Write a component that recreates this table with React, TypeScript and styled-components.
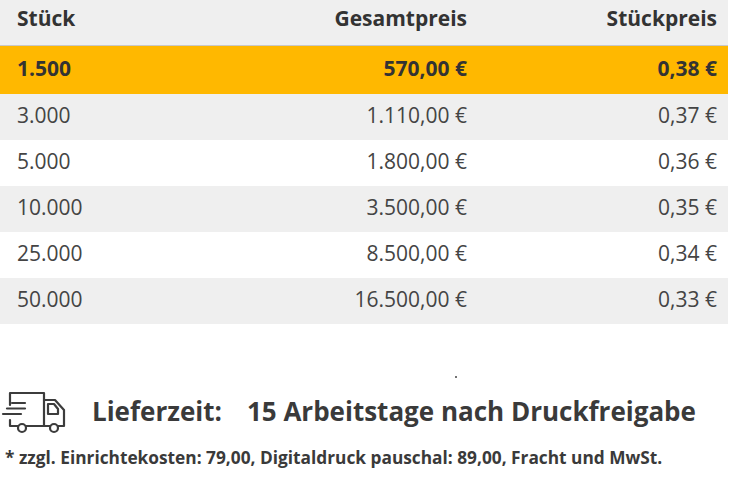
import React from "react";
import styled, { createGlobalStyle } from "styled-components";

const GlobalStyles = createGlobalStyle`
  html, body {
    margin: 0;
    padding: 0;
    background: #ffffff;
  }
  body {
    font-family: "Open Sans", "Noto Sans", sans-serif;
    color: #3a3a3a;
  }
`;

const Page = styled.main`
  width: 730px;
  display: flex;
  flex-direction: column;
`;

const Table = styled.div`
  width: 728px;
  display: flex;
  flex-direction: column;
`;

const Row = styled.div<{ $variant: "head" | "active" | "grey" | "white" }>`
  display: grid;
  grid-template-columns: 200px 250px 250px;
  align-items: center;
  padding: 0 11px 0 17px;
  box-sizing: border-box;
  height: ${(p) => (p.$variant === "active" ? "48px" : "46px")};
  padding-bottom: ${(p) => (p.$variant === "head" ? "9px" : "4px")};
  font-size: 21px;
  font-weight: ${(p) => (p.$variant === "head" || p.$variant === "active" ? 700 : 400)};
  color: ${(p) => (p.$variant === "head" || p.$variant === "active" ? "#333333" : "#444444")};
  background: ${(p) =>
    p.$variant === "active" ? "#ffb800" : p.$variant === "white" ? "#ffffff" : "#efefef"};
  border-bottom: ${(p) => (p.$variant === "head" ? "1px solid #c8c8c8" : "none")};
`;

const Cell = styled.span<{ $right?: boolean }>`
  text-align: ${(p) => (p.$right ? "right" : "left")};
  white-space: nowrap;
`;

const Spacer = styled.div`
  height: 64px;
  position: relative;
`;

const Dot = styled.span`
  position: absolute;
  left: 455px;
  top: 52px;
  width: 2px;
  height: 2px;
  border-radius: 1px;
  background: #444;
`;

const Delivery = styled.div`
  display: flex;
  align-items: center;
  height: 48px;
`;

const TruckIcon = styled.svg`
  width: 72px;
  height: 48px;
  flex: none;
`;

const DeliveryLabel = styled.span`
  margin-left: 20px;
  font-size: 26px;
  font-weight: 700;
  color: #3a3a3a;
  padding-bottom: 2px;
`;

const DeliveryValue = styled.span`
  margin-left: 25px;
  font-size: 26px;
  font-weight: 700;
  color: #3a3a3a;
  padding-bottom: 2px;
  white-space: nowrap;
`;

const Note = styled.p`
  margin: 10px 0 0 5px;
  font-size: 17.3px;
  font-weight: 700;
  color: #3a3a3a;
  white-space: nowrap;
`;

const prices = [
  { qty: "1.500", total: "570,00 €", unit: "0,38 €" },
  { qty: "3.000", total: "1.110,00 €", unit: "0,37 €" },
  { qty: "5.000", total: "1.800,00 €", unit: "0,36 €" },
  { qty: "10.000", total: "3.500,00 €", unit: "0,35 €" },
  { qty: "25.000", total: "8.500,00 €", unit: "0,34 €" },
  { qty: "50.000", total: "16.500,00 €", unit: "0,33 €" },
];

function Truck() {
  return (
    <TruckIcon viewBox="0 0 72 48" fill="none" stroke="#3c3c3c" strokeWidth="2.2" strokeLinecap="round" strokeLinejoin="round">
      <path d="M10 17V5H44V38" />
      <path d="M44 12H55L64 22V38H58" />
      <path d="M48 16H54L58 21V26H48Z" />
      <path d="M12 15H25" />
      <path d="M7 20.5H25" />
      <path d="M3 26H21" />
      <path d="M10 32V38H18" />
      <circle cx="22" cy="40" r="4" />
      <path d="M26 38H50" />
      <circle cx="54" cy="40" r="4" />
    </TruckIcon>
  );
}

export default function App() {
  return (
    <Page>
      <GlobalStyles />
      <Table>
        <Row $variant="head">
          <Cell>Stück</Cell>
          <Cell $right>Gesamtpreis</Cell>
          <Cell $right>Stückpreis</Cell>
        </Row>
        {prices.map((p, i) => (
          <Row key={p.qty} $variant={i === 0 ? "active" : i % 2 === 1 ? "grey" : "white"}>
            <Cell>{p.qty}</Cell>
            <Cell $right>{p.total}</Cell>
            <Cell $right>{p.unit}</Cell>
          </Row>
        ))}
      </Table>
      <Spacer>
        <Dot />
      </Spacer>
      <Delivery>
        <Truck />
        <DeliveryLabel>Lieferzeit:</DeliveryLabel>
        <DeliveryValue>15 Arbeitstage nach Druckfreigabe</DeliveryValue>
      </Delivery>
      <Note>* zzgl. Einrichtekosten: 79,00, Digitaldruck pauschal: 89,00, Fracht und MwSt.</Note>
    </Page>
  );
}
